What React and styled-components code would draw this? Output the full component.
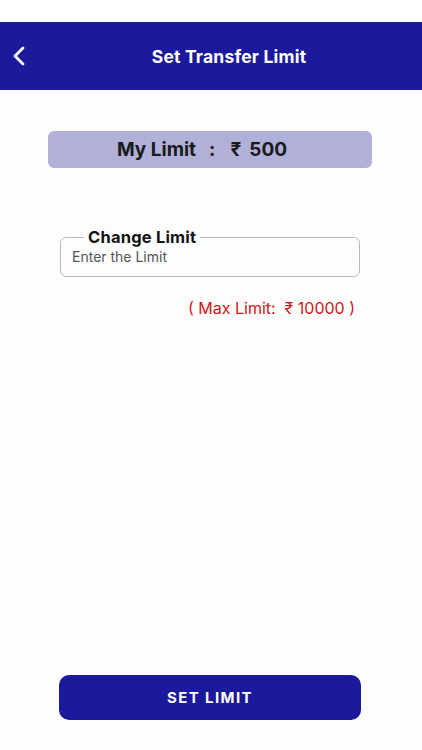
import React, { useState } from "react";
import styled, { createGlobalStyle } from "styled-components";

const Global = createGlobalStyle`
  html, body { margin: 0; padding: 0; background: #fdfdfd; }
  body { font-family: Inter, "Noto Sans", sans-serif; }
  * { box-sizing: border-box; }
`;

const Screen = styled.div`
  width: 422px;
  height: 750px;
  display: flex;
  flex-direction: column;
  background: #fdfdfd;
`;

const StatusBar = styled.div`
  height: 22px;
  background: #ffffff;
`;

const Header = styled.div`
  height: 68px;
  background: #1c1a9c;
  display: flex;
  align-items: center;
  padding: 0 0 0 12px;
`;

const BackBtn = styled.button`
  background: none;
  border: none;
  padding: 0;
  width: 16px;
  height: 24px;
  display: flex;
  align-items: center;
  cursor: pointer;
`;

const Title = styled.h1`
  flex: 1;
  margin: 0;
  text-align: center;
  color: #fff;
  font-size: 17.5px;
  font-weight: 700;
  letter-spacing: 0.2px;
  padding-left: 8px;
`;

const Body = styled.div`
  flex: 1;
  display: flex;
  flex-direction: column;
  padding: 41px 50px 0 48px;
`;

const LimitBox = styled.div`
  height: 37px;
  background: #b0b0d9;
  border-radius: 6px;
  display: flex;
  align-items: center;
  justify-content: center;
  font-size: 19px;
  font-weight: 700;
  color: #1a1a1a;
  padding-right: 16px;
`;

const Part = styled.span`
  margin-left: ${p => p.gap || 0}px;
`;

const Field = styled.fieldset`
  margin: 60px 12px 0 12px;
  border: 1.3px solid #b9b9b9;
  border-radius: 6px;
  padding: 0 11px 6px 11px;
  height: 49px;
`;

const Legend = styled.legend`
  font-size: 16.5px;
  font-weight: 700;
  color: #111;
  padding: 0 4px;
  margin-left: 12px;
  line-height: 18px;
  letter-spacing: 0.2px;
`;

const Input = styled.input`
  border: none;
  outline: none;
  background: transparent;
  width: 100%;
  font-family: inherit;
  font-size: 14px;
  color: #333;
  padding: 0;
  &::placeholder { color: #555; }
`;

const MaxNote = styled.div`
  margin: 21px 17px 0 0;
  align-self: flex-end;
  color: #d01818;
  font-size: 16px;
  white-space: pre;
`;

const Footer = styled.div`
  padding: 0 61px 30px 59px;
`;

const Submit = styled.button`
  width: 100%;
  height: 45px;
  border: none;
  border-radius: 10px;
  background: #1c1a9c;
  color: #fff;
  font-family: inherit;
  font-size: 15px;
  font-weight: 700;
  letter-spacing: 1.4px;
  cursor: pointer;
`;

export default function App() {
  const [limit, setLimit] = useState("");
  return (
    <Screen>
      <Global />
      <StatusBar />
      <Header>
        <BackBtn aria-label="back">
          <svg width="14" height="20" viewBox="0 0 14 20">
            <path d="M11 2 L3 10 L11 18" fill="none" stroke="#fff" strokeWidth="2.8" strokeLinecap="round" strokeLinejoin="round" />
          </svg>
        </BackBtn>
        <Title>Set Transfer Limit</Title>
      </Header>
      <Body>
        <LimitBox>
          <Part>My Limit</Part>
          <Part gap={13}>:</Part>
          <Part gap={15}>₹</Part>
          <Part gap={8}>500</Part>
        </LimitBox>
        <Field>
          <Legend>Change Limit</Legend>
          <Input placeholder="Enter the Limit" value={limit} onChange={e => setLimit(e.target.value)} />
        </Field>
        <MaxNote>{"( Max Limit:  ₹ 10000 )"}</MaxNote>
      </Body>
      <Footer>
        <Submit>SET LIMIT</Submit>
      </Footer>
    </Screen>
  );
}
